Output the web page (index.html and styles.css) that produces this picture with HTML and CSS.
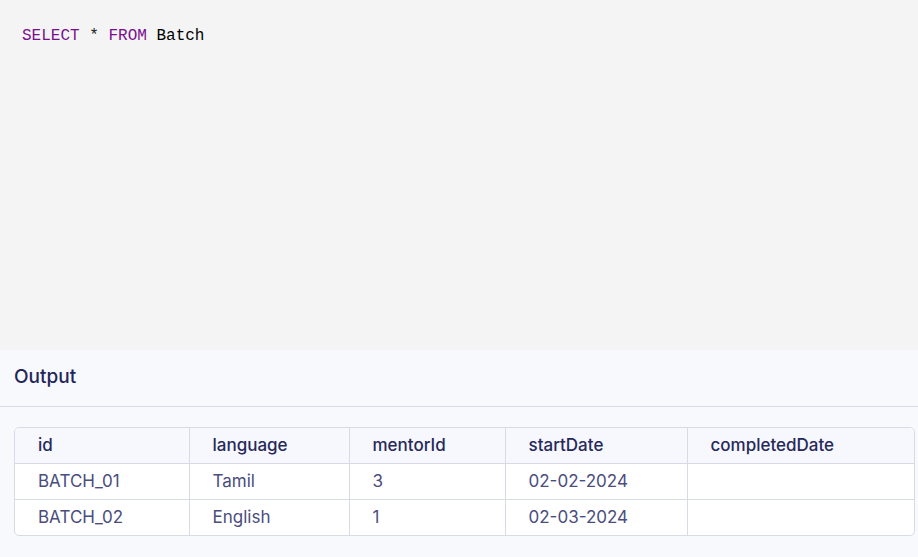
FILE: index.html
```html
<!DOCTYPE html>
<html>
<head>
<meta charset="utf-8">
<link rel="stylesheet" href="styles.css">
</head>
<body>
<div class="editor">
  <div class="code"><span class="kw">SELECT</span> <span class="op">*</span> <span class="kw">FROM</span> <span class="id">Batch</span></div>
</div>
<div class="output">
  <div class="output-head">Output</div>
  <div class="table-wrap">
    <table class="result">
      <colgroup>
        <col class="c1"><col class="c2"><col class="c3"><col class="c4"><col class="c5">
      </colgroup>
      <thead>
        <tr><th>id</th><th>language</th><th>mentorId</th><th>startDate</th><th>completedDate</th></tr>
      </thead>
      <tbody>
        <tr><td>BATCH_01</td><td>Tamil</td><td>3</td><td>02-02-2024</td><td></td></tr>
        <tr><td>BATCH_02</td><td>English</td><td>1</td><td>02-03-2024</td><td></td></tr>
      </tbody>
    </table>
  </div>
</div>
</body>
</html>
```
FILE: styles.css
```css
* { box-sizing: border-box; }
html, body { margin: 0; padding: 0; }
body {
  width: 918px;
  height: 557px;
  overflow: hidden;
  background: #f8f9fc;
  font-family: Inter, "Noto Sans", sans-serif;
}
.editor {
  height: 350px;
  background: #f4f4f4;
  padding: 26px 0 0 22px;
}
.code {
  font-family: "Liberation Mono", "DejaVu Sans Mono", monospace;
  font-size: 16px;
  line-height: 20px;
  color: #000;
}
.code .kw { color: #7a0f8e; }
.code .op { color: #222; }
.code .id { color: #000; }
.output {
  background: #f8f9fc;
}
.output-head {
  height: 57px;
  padding: 15px 0 0 14px;
  font-size: 19px;
  font-weight: 500;
  color: #222659;
  border-bottom: 1px solid #d7dbe6;
}
.table-wrap {
  margin: 20px 3px 0 14px;
  border: 1px solid #d6dbe6;
  border-radius: 5px;
  overflow: hidden;
  background: #fff;
}
.result {
  width: 100%;
  border-collapse: collapse;
  table-layout: fixed;
}
.c1 { width: 174px; }
.c2 { width: 160px; }
.c3 { width: 156px; }
.c4 { width: 182px; }
.result th, .result td {
  height: 36px;
  padding: 0 0 0 23px;
  text-align: left;
  font-size: 17px;
  border-right: 1px solid #d6dbe6;
  border-bottom: 1px solid #d6dbe6;
}
.result thead th { height: 35px; }
.result th:last-child, .result td:last-child { border-right: none; }
.result tbody tr:last-child td { border-bottom: none; height: 36px; }
.result th {
  background: #f6f8fd;
  font-weight: 500;
  color: #26295a;
}
.result td {
  font-weight: 400;
  color: #4a4d7e;
}
```
